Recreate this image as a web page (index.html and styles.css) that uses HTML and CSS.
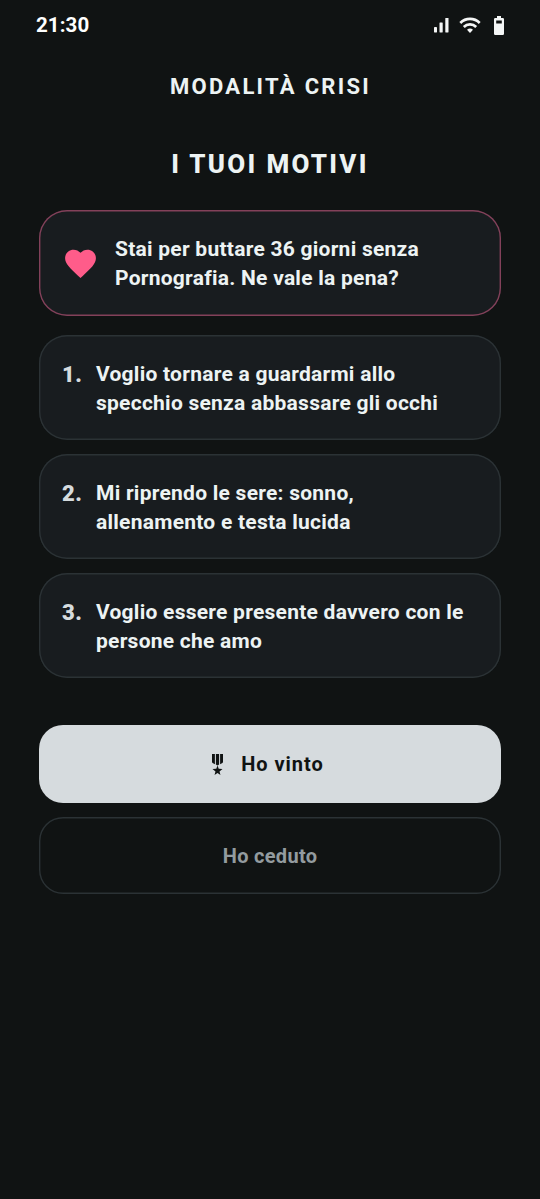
FILE: index.html
```html
<!DOCTYPE html>
<html lang="it">
<head>
<meta charset="utf-8">
<title>Modalità crisi</title>
<link rel="stylesheet" href="styles.css">
</head>
<body>
<header class="status">
  <span class="time">21:30</span>
  <span class="status-icons">
    <svg width="16" height="16" viewBox="0 0 16 16" fill="#f4f6f6"><rect x="1" y="10" width="3" height="5.500" rx=".4"/><rect x="6.500" y="5.500" width="3.200" height="10" rx=".4"/><rect x="12.300" y="1" width="3.200" height="14.500" rx=".4"/></svg>
    <svg class="wifi" width="22" height="16" viewBox="0 0 22 16" fill="none" stroke="#f4f6f6" stroke-width="2.700"><path d="M1.300 6a13.700 13.700 0 0 1 19.400 0M4.800 10a8.800 8.800 0 0 1 12.400 0"/><path d="M8 12.800a4.400 4.400 0 0 1 6 0L11 16z" fill="#f4f6f6" stroke="none"/></svg>
    <svg class="battery" width="10" height="19" viewBox="0 0 10 19"><path fill="#f4f6f6" fill-rule="evenodd" d="M3 0h4v2h1.800Q10 2 10 3.200v14.600Q10 19 8.800 19H1.200Q0 19 0 17.800V3.200Q0 2 1.200 2H3zM2.200 4.500v3h5.600v-3z"/></svg>
  </span>
</header>
<main class="screen">
  <h1 class="mode">MODALITÀ CRISI</h1>
  <h2 class="heading">I TUOI MOTIVI</h2>
  <section class="card warning">
    <svg class="heart" width="37" height="37" viewBox="0 0 24 24"><path fill="#ff5c8a" d="M12 21.350l-1.450-1.320C5.400 15.360 2 12.280 2 8.500 2 5.420 4.420 3 7.500 3c1.740 0 3.410.81 4.500 2.090C13.090 3.810 14.760 3 16.500 3 19.580 3 22 5.420 22 8.500c0 3.780-3.400 6.860-8.550 11.540L12 21.350z"/></svg>
    <p>Stai per buttare 36 giorni senza<br>Pornografia. Ne vale la pena?</p>
  </section>
  <ol class="reasons">
    <li class="card"><span class="num">1.</span><p>Voglio tornare a guardarmi allo<br>specchio senza abbassare gli occhi</p></li>
    <li class="card"><span class="num">2.</span><p>Mi riprendo le sere: sonno,<br>allenamento e testa lucida</p></li>
    <li class="card"><span class="num">3.</span><p>Voglio essere presente davvero con le<br>persone che amo</p></li>
  </ol>
  <button class="btn won">
    <svg width="25" height="25" viewBox="0 0 25 25" fill="#101313"><path d="M7 2h2.900v10.200L7.600 10.900Q7 10.500 7 9.800zM10.900 2h3.200v10.500l-1.600 1-1.600-1zM15.100 2H18v7.800q0 .7-.6 1.100l-2.300 1.300zM12.500 13.500l1.200 3.300 3.800.2-3 2.400 1 3.600-3-2.100-3 2.100 1-3.600-3-2.400 3.800-.2z"/></svg>
    <span>Ho vinto</span>
  </button>
  <button class="btn lost">Ho ceduto</button>
</main>
</body>
</html>
```
FILE: styles.css
```css
* { box-sizing: border-box; }
body { margin: 0; min-height: 1199px; background: #101313; color: #edf3f3; font-family: Roboto, sans-serif; font-weight: 700; }
p, h1, h2, ol { margin: 0; padding: 0; }
svg { display: block; flex: none; }
.status { display: flex; justify-content: space-between; height: 50px; padding: 0 36px; }
.time { font-size: 20.500px; letter-spacing: .1px; line-height: 50px; color: #fff; }
.status-icons { display: flex; align-items: center; }
.wifi { margin-left: 10px; }
.battery { margin-left: 13px; }
.screen { display: flex; flex-direction: column; padding: 0 39px; }
.mode { margin-top: 23px; font-size: 22px; line-height: 28px; letter-spacing: 2.300px; text-align: center; text-indent: 1px; }
.heading { margin-top: 47px; font-size: 26px; font-weight: 800; line-height: 32px; letter-spacing: 2.300px; text-align: center; }
.card { display: flex; height: 105px; border-radius: 28px; background: #181c1f; box-shadow: inset 0 0 0 1.400px #2b3235; font-size: 21px; line-height: 29px; padding: 25px 23px 22px; letter-spacing: .25px; white-space: nowrap; }
.warning { height: 106px; margin-top: 30px; padding: 24px 23px; box-shadow: inset 0 0 0 1.400px #83415a; align-items: center; }
.warning p { padding-top: 1px; }
.heart { margin-right: 16px; }
.reasons { display: flex; flex-direction: column; gap: 14px; margin-top: 19px; list-style: none; }
.num { width: 34px; color: #d5dbde; font-size: 22px; font-weight: 900; letter-spacing: .5px; }
.btn { display: flex; align-items: center; justify-content: center; gap: 11px; height: 77px; border: 0; border-radius: 24px; padding: 0; font: 700 20px Roboto, sans-serif; letter-spacing: .3px; }
.won { height: 78px; margin-top: 47px; padding-right: 11px; background: #d6dbde; color: #101313; letter-spacing: .95px; }
.lost { margin-top: 14px; background: transparent; box-shadow: inset 0 0 0 1.400px #2b3235; color: #939b9f; }
```
